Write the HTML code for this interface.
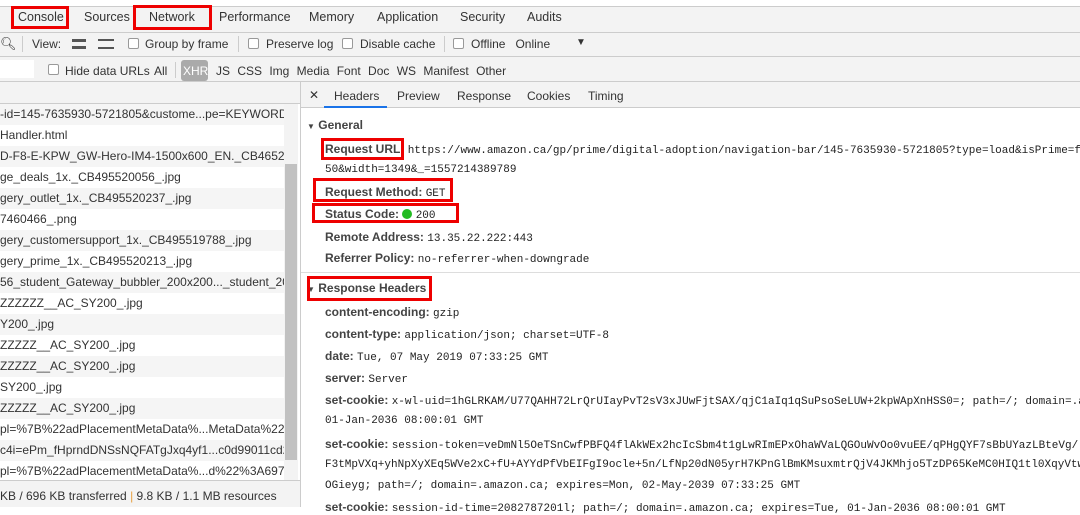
<!DOCTYPE html>
<html><head><style>
*{margin:0;padding:0;box-sizing:border-box}
body{width:1080px;height:507px;overflow:hidden;background:#fff;font-family:"Liberation Sans",sans-serif;font-size:12px;color:#333;position:relative}
.a{position:absolute;white-space:nowrap}
.m{font-family:"Liberation Mono",monospace;font-size:11px;color:#222}
.red{position:absolute;border:3px solid #e00;}
.b{font-weight:bold;color:#444}
.cb{position:absolute;width:11px;height:11px;border:1px solid #999;border-radius:2px;background:#fff}
</style></head><body>
<div class="a" style="left:0;top:0;width:1080px;height:7px;background:#fff;border-bottom:1px solid #ccc"></div>
<div class="a" style="left:0;top:7px;width:1080px;height:26px;background:#f3f3f3;border-bottom:1px solid #ccc"></div>
<div class="a" style="left:18px;top:10px;font-size:12.5px">Console</div>
<div class="a" style="left:84px;top:10px;font-size:12.5px">Sources</div>
<div class="a" style="left:149px;top:10px;font-size:12.5px">Network</div>
<div class="a" style="left:138px;top:28px;width:70px;height:2px;background:#1a73e8"></div>
<div class="a" style="left:219px;top:10px;font-size:12.5px">Performance</div>
<div class="a" style="left:309px;top:10px;font-size:12.5px">Memory</div>
<div class="a" style="left:377px;top:10px;font-size:12.5px">Application</div>
<div class="a" style="left:460px;top:10px;font-size:12.5px">Security</div>
<div class="a" style="left:527px;top:10px;font-size:12.5px">Audits</div>
<div class="red" style="left:11px;top:6px;width:58px;height:23px"></div>
<div class="red" style="left:133px;top:5px;width:79px;height:25px"></div>
<!-- toolbar -->
<div class="a" style="left:0;top:33px;width:1080px;height:24px;background:#f3f3f3;border-bottom:1px solid #ccc"></div>
<div class="a" style="left:0;top:36px;font-size:13px">&#x1F50D;&#xFE0E;</div>
<div class="a" style="left:22px;top:36px;width:1px;height:16px;background:#ccc"></div>
<div class="a" style="left:32px;top:37px">View:</div>
<div class="a" style="left:72px;top:39px;width:14px;height:10px;border-top:3px solid #555;border-bottom:3px solid #555"></div>
<div class="a" style="left:98px;top:39px;width:16px;height:10px;border-top:2px solid #555;border-bottom:2px solid #555"></div>
<div class="cb" style="left:128px;top:38px"></div><div class="a" style="left:145px;top:37px">Group by frame</div>
<div class="a" style="left:238px;top:36px;width:1px;height:16px;background:#ccc"></div>
<div class="cb" style="left:248px;top:38px"></div><div class="a" style="left:266px;top:37px">Preserve log</div>
<div class="cb" style="left:342px;top:38px"></div><div class="a" style="left:360px;top:37px">Disable cache</div>
<div class="a" style="left:444px;top:36px;width:1px;height:16px;background:#ccc"></div>
<div class="cb" style="left:453px;top:38px"></div><div class="a" style="left:471px;top:37px">Offline &nbsp;&nbsp;Online</div>
<div class="a" style="left:576px;top:37px;font-size:10px">▼</div>
<div class="a" style="left:0;top:57px;width:1080px;height:25px;background:#f3f3f3;border-bottom:1px solid #ccc"></div>
<div class="a" style="left:0;top:60px;width:34px;height:18px;background:#fff"></div>
<div class="cb" style="left:48px;top:64px"></div><div class="a" style="left:65px;top:64px">Hide data URLs</div>
<div class="a" style="left:154px;top:64px">All</div>
<div class="a" style="left:175px;top:62px;width:1px;height:16px;background:#ccc"></div>
<div class="a" style="left:181px;top:60px;width:27px;height:21px;background:#aaa;border-radius:3px;color:#fff;padding:4px 2px">XHR</div>
<div class="a" style="left:216px;top:64px;word-spacing:4px">JS CSS Img Media Font Doc WS Manifest Other</div>
<!-- left list -->
<div class="a" style="left:0;top:82px;width:300px;height:22px;background:#f3f3f3;border-bottom:1px solid #ccc"></div>
<div id="rows"></div>
<div class="a" style="left:284px;top:104px;width:14px;height:376px;background:#f3f3f3"></div>
<div class="a" style="left:285px;top:164px;width:12px;height:296px;background:#c1c1c1"></div>
<div class="a" style="left:0;top:480px;width:300px;height:27px;background:#f3f3f3;border-top:1px solid #ccc"></div>
<div class="a" style="left:0;top:489px;color:#333">KB / 696 KB transferred <span style="color:#e8a040">|</span> 9.8 KB / 1.1 MB resources</div>
<div class="a" style="left:300px;top:82px;width:1px;height:425px;background:#ccc"></div>
<!-- right tabs -->
<div class="a" style="left:301px;top:82px;width:779px;height:26px;background:#f3f3f3;border-bottom:1px solid #ccc"></div>
<div class="a" style="left:309px;top:88px">✕</div>
<div class="a" style="left:334px;top:89px">Headers</div>
<div class="a" style="left:324px;top:106px;width:63px;height:2px;background:#1a73e8"></div>
<div class="a" style="left:397px;top:89px">Preview</div>
<div class="a" style="left:457px;top:89px">Response</div>
<div class="a" style="left:527px;top:89px">Cookies</div>
<div class="a" style="left:588px;top:89px">Timing</div>
<div class="a b" style="left:307px;top:118px"><span style="font-size:8px">▼</span> General</div>
<div class="a" style="left:325px;top:142px"><span class="b">Request URL:</span> <span class="m">https://www.amazon.ca/gp/prime/digital-adoption/navigation-bar/145-7635930-5721805?type=load&amp;isPrime=f</span></div>
<div class="a m" style="left:325px;top:164px">50&amp;width=1349&amp;_=1557214389789</div>
<div class="a" style="left:325px;top:185px"><span class="b">Request Method:</span> <span class="m">GET</span></div>
<div class="a" style="left:325px;top:207px"><span class="b">Status Code:</span> <span style="display:inline-block;width:10px;height:10px;border-radius:50%;background:#2b2;vertical-align:-1px"></span> <span class="m">200</span></div>
<div class="a" style="left:325px;top:230px"><span class="b">Remote Address:</span> <span class="m">13.35.22.222:443</span></div>
<div class="a" style="left:325px;top:251px"><span class="b">Referrer Policy:</span> <span class="m">no-referrer-when-downgrade</span></div>
<div class="a" style="left:301px;top:272px;width:779px;height:1px;background:#ddd"></div>
<div class="a b" style="left:307px;top:281px"><span style="font-size:8px">▼</span> Response Headers</div>
<div class="a" style="left:325px;top:305px"><span class="b">content-encoding:</span> <span class="m">gzip</span></div>
<div class="a" style="left:325px;top:327px"><span class="b">content-type:</span> <span class="m">application/json; charset=UTF-8</span></div>
<div class="a" style="left:325px;top:349px"><span class="b">date:</span> <span class="m">Tue, 07 May 2019 07:33:25 GMT</span></div>
<div class="a" style="left:325px;top:371px"><span class="b">server:</span> <span class="m">Server</span></div>
<div class="a" style="left:325px;top:393px"><span class="b">set-cookie:</span> <span class="m">x-wl-uid=1hGLRKAM/U77QAHH72LrQrUIayPvT2sV3xJUwFjtSAX/qjC1aIq1qSuPsoSeLUW+2kpWApXnHSS0=; path=/; domain=.a</span></div>
<div class="a m" style="left:325px;top:415px">01-Jan-2036 08:00:01 GMT</div>
<div class="a" style="left:325px;top:437px"><span class="b">set-cookie:</span> <span class="m">session-token=veDmNl5OeTSnCwfPBFQ4flAkWEx2hcIcSbm4t1gLwRImEPxOhaWVaLQGOuWvOo0vuEE/qPHgQYF7sBbUYazLBteVg/</span></div>
<div class="a m" style="left:325px;top:459px">F3tMpVXq+yhNpXyXEq5WVe2xC+fU+AYYdPfVbEIFgI9ocle+5n/LfNp20dN05yrH7KPnGlBmKMsuxmtrQjV4JKMhjo5TzDP65KeMC0HIQ1tl0XqyVtw</div>
<div class="a m" style="left:325px;top:480px">OGieyg; path=/; domain=.amazon.ca; expires=Mon, 02-May-2039 07:33:25 GMT</div>
<div class="a" style="left:325px;top:500px"><span class="b">set-cookie:</span> <span class="m">session-id-time=2082787201l; path=/; domain=.amazon.ca; expires=Tue, 01-Jan-2036 08:00:01 GMT</span></div>
<div class="red" style="left:321px;top:138px;width:83px;height:22px"></div>
<div class="red" style="left:313px;top:178px;width:140px;height:24px"></div>
<div class="red" style="left:312px;top:203px;width:147px;height:20px"></div>
<div class="red" style="left:307px;top:276px;width:125px;height:25px"></div>
<script>
var t=["-id=145-7635930-5721805&custome...pe=KEYWORD.","Handler.html","D-F8-E-KPW_GW-Hero-IM4-1500x600_EN._CB465284","ge_deals_1x._CB495520056_.jpg","gery_outlet_1x._CB495520237_.jpg","7460466_.png","gery_customersupport_1x._CB495519788_.jpg","gery_prime_1x._CB495520213_.jpg","56_student_Gateway_bubbler_200x200..._student_200x","ZZZZZZ__AC_SY200_.jpg","Y200_.jpg","ZZZZZ__AC_SY200_.jpg","ZZZZZ__AC_SY200_.jpg","SY200_.jpg","ZZZZZ__AC_SY200_.jpg","pl=%7B%22adPlacementMetaData%...MetaData%22..","c4i=ePm_fHprndDNSsNQFATgJxq4yf1...c0d99011cd27","pl=%7B%22adPlacementMetaData%...d%22%3A6977"];
var h="";t.forEach(function(s,i){h+='<div class="a" style="left:0;top:'+(104+i*21)+'px;width:284px;height:21px;overflow:hidden;padding-top:3px;background:'+(i%2?'#fff':'#f5f5f5')+'">'+s.replace(/&/g,'&amp;')+'</div>';});
document.getElementById('rows').innerHTML=h;
</script>
</body></html>
